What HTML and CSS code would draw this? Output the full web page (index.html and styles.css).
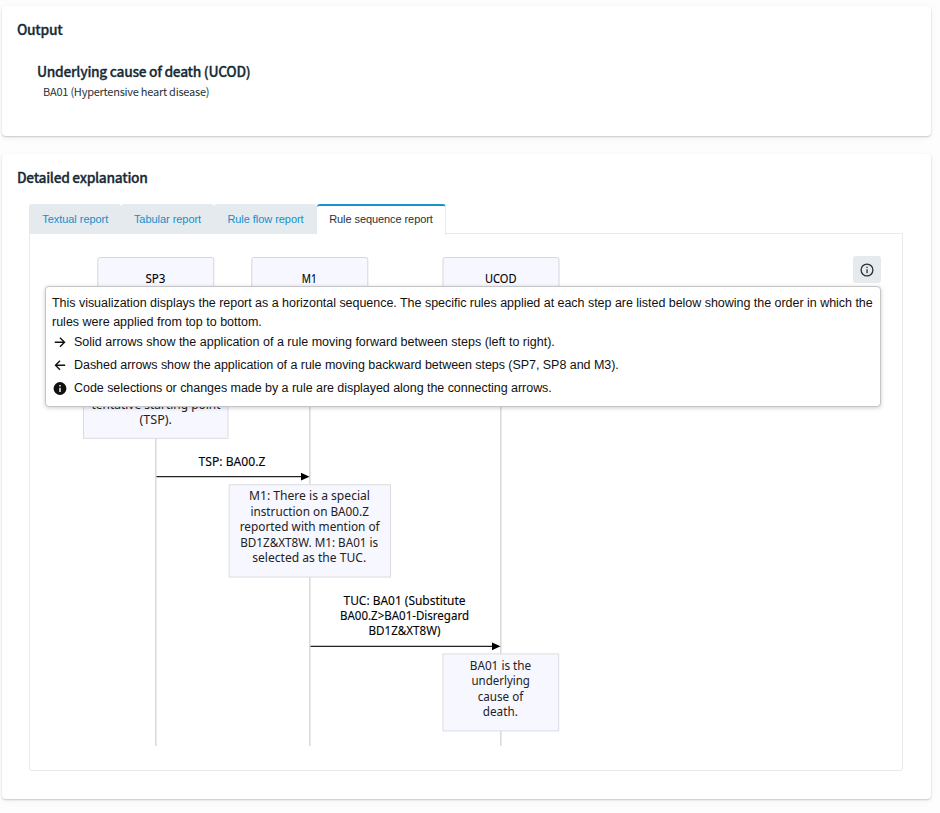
FILE: index.html
```html
<!DOCTYPE html>
<html lang="en">
<head>
<meta charset="utf-8">
<title>Detailed explanation</title>
<link rel="stylesheet" href="styles.css">
</head>
<body>
<section class="card output">
  <h2>Output</h2>
  <div class="result">
    <h3>Underlying cause of death (UCOD)</h3>
    <p>BA01 (Hypertensive heart disease)</p>
  </div>
</section>
<section class="card detail">
  <h2>Detailed explanation</h2>
  <nav class="tabs">
    <a class="tab t1">Textual report</a>
    <a class="tab t2">Tabular report</a>
    <a class="tab t3">Rule flow report</a>
    <a class="tab t4 active">Rule sequence report</a>
  </nav>
  <div class="panel">
    <svg class="diagram" viewBox="30 234 872 535" width="872" height="535">
      <g class="lifeline">
        <path d="M155.8 300V746M309.8 300V746M500.8 300V746"/>
      </g>
      <g class="actor">
        <rect x="97.800" y="257.500" width="116" height="50" rx="2"/>
        <rect x="251.800" y="257.500" width="116" height="50" rx="2"/>
        <rect x="443" y="257.500" width="116" height="50" rx="2"/>
      </g>
      <g class="note">
        <rect x="83.500" y="330" width="144.500" height="108.300"/>
        <rect x="229.200" y="484.700" width="161.300" height="92.300"/>
        <rect x="443" y="653.900" width="115.700" height="77"/>
      </g>
      <g class="arrow">
        <path class="line" d="M156.500 476.700H302M310.500 646.300H493"/>
        <path d="M301 472.800L309.500 476.700L301 480.600ZM492 642.400L500.500 646.300L492 650.200Z"/>
      </g>
      <g class="label">
        <text class="strong" x="155.500" y="282.700" textLength="20" lengthAdjust="spacingAndGlyphs">SP3</text>
        <text class="strong" x="309.300" y="282.700" textLength="15" lengthAdjust="spacingAndGlyphs">M1</text>
        <text class="strong" x="500.700" y="282.700" textLength="31.500" lengthAdjust="spacingAndGlyphs">UCOD</text>
        <text x="156" y="408.600" textLength="129" lengthAdjust="spacingAndGlyphs">tentative starting point</text>
        <text x="155.700" y="424" textLength="32.500" lengthAdjust="spacingAndGlyphs">(TSP).</text>
        <text class="strong" x="232" y="466" textLength="67" lengthAdjust="spacingAndGlyphs">TSP: BA00.Z</text>
        <text x="309.500" y="500.400" textLength="121" lengthAdjust="spacingAndGlyphs">M1: There is a special</text>
        <text x="309.700" y="515.900" textLength="118.500" lengthAdjust="spacingAndGlyphs">instruction on BA00.Z</text>
        <text x="309.700" y="531.300" textLength="140" lengthAdjust="spacingAndGlyphs">reported with mention of</text>
        <text x="309.200" y="546.700" textLength="138" lengthAdjust="spacingAndGlyphs">BD1Z&amp;XT8W. M1: BA01 is</text>
        <text x="309.200" y="562.400" textLength="114" lengthAdjust="spacingAndGlyphs">selected as the TUC.</text>
        <text class="strong" x="404.500" y="604.500" textLength="122" lengthAdjust="spacingAndGlyphs">TUC: BA01 (Substitute</text>
        <text class="strong" x="404.500" y="620" textLength="129" lengthAdjust="spacingAndGlyphs">BA00.Z&gt;BA01-Disregard</text>
        <text class="strong" x="404.500" y="635.300" textLength="72" lengthAdjust="spacingAndGlyphs">BD1Z&amp;XT8W)</text>
        <text x="500.500" y="670" textLength="61.500" lengthAdjust="spacingAndGlyphs">BA01 is the</text>
        <text x="500.700" y="685.300" textLength="58.500" lengthAdjust="spacingAndGlyphs">underlying</text>
        <text x="500.500" y="700.900" textLength="45.500" lengthAdjust="spacingAndGlyphs">cause of</text>
        <text x="500.300" y="716.300" textLength="35" lengthAdjust="spacingAndGlyphs">death.</text>
      </g>
    </svg>
    <button class="info" aria-label="Info">
      <svg viewBox="0 0 14 14" width="14" height="14"><circle cx="7" cy="7" r="5.900" fill="none" stroke="#263238" stroke-width="1.300"/><path d="M6.400 3.700h1.300v1.300H6.400zM6.400 6.200h1.300v4.100H6.400z" fill="#263238"/></svg>
    </button>
    <div class="tooltip">
      <p><span class="lead">This visualization displays the report as a horizontal sequence. The specific rules applied at each step are listed below showing the order in which the</span><br>rules were applied from top to bottom.</p>
      <div class="row">
        <svg viewBox="0 0 14 14" width="14" height="14"><path d="M1.800 6.200H11.300M7 1.700L11.500 6.200L7 10.700" fill="none" stroke="#111" stroke-width="1.400"/></svg>
        <span>Solid arrows show the application of a rule moving forward between steps (left to right).</span>
      </div>
      <div class="row">
        <svg viewBox="0 0 14 14" width="14" height="14"><path d="M12.200 6.200H2.700M7 1.700L2.500 6.200L7 10.700" fill="none" stroke="#111" stroke-width="1.400"/></svg>
        <span class="tight">Dashed arrows show the application of a rule moving backward between steps (SP7, SP8 and M3).</span>
      </div>
      <div class="row">
        <svg viewBox="0 0 14 14" width="14" height="14"><circle cx="7" cy="6.500" r="6.400" fill="#111"/><path d="M6.300 3.100h1.400v1.400H6.300zM6.300 5.700h1.400v4.200H6.300z" fill="#fff"/></svg>
        <span class="tight">Code selections or changes made by a rule are displayed along the connecting arrows.</span>
      </div>
    </div>
  </div>
</section>
</body>
</html>
```
FILE: styles.css
```css
* { box-sizing: border-box; }
body {
  margin: 0;
  padding: 6px 9px 0 1.5px;
  min-height: 813px;
  background: #fdfdfd;
  color: #172b35;
  font-family: "Liberation Sans", Arial, sans-serif;
}
h2, h3, p { margin: 0; }
.card {
  background: #fff;
  border-radius: 4px;
  box-shadow: 0 1px 2px rgba(0, 0, 0, .2), 0 2px 8px rgba(0, 0, 0, .04);
}
.output { height: 130px; padding: 13px 15.500px; }
.detail { height: 645px; margin-top: 18px; padding: 13px 28px 0 27.500px; }
h2, h3, .result p { font-family: "Noto Sans CJK SC", sans-serif; white-space: nowrap; }
h2, h3 { font-weight: 500; font-size: 13.800px; line-height: 20px; letter-spacing: -.3px; -webkit-text-stroke: .3px #172b35; }
.detail h2 { margin-left: -12px; }
.result { padding: 22px 0 0 20px; }
.result p { font-size: 11px; line-height: 18px; letter-spacing: -.24px; margin: 1px 0 0 6px; color: #263238; }
.tabs { display: flex; height: 30px; margin-top: 17px; position: relative; z-index: 1; }
.tab {
  display: flex;
  align-items: center;
  justify-content: center;
  height: 30px;
  padding-left: 1px;
  font-size: 11px;
  white-space: nowrap;
  color: #158fcb;
  background: #e4eaed;
  border-radius: 3px 3px 0 0;
}
.t1 { width: 91.500px; letter-spacing: -.05px; }
.t2 { width: 93px; letter-spacing: -.05px; }
.t3 { width: 103px; letter-spacing: -.05px; }
.t4 { width: 129px; letter-spacing: -.08px; }
.tab.active {
  height: 31px;
  padding-bottom: 3px;
  color: #263238;
  background: #fff;
  border-top: 2px solid #1594cf;
  border-right: 1px solid #e4eaed;
}
.panel {
  position: relative;
  width: 874px;
  height: 537.500px;
  border: 1px solid #e4eaed;
  border-radius: 0 0 3px 3px;
  margin-top: -1px;
}
.diagram { display: block; }
.lifeline path { stroke: #dcdcdc; stroke-width: 1.700; fill: none; }
.actor rect { fill: #f6f7ff; stroke: #d6d6dc; }
.note rect { fill: #f7f7ff; stroke: #dcdce0; }
.arrow path { fill: #000; }
.arrow .line { stroke: #222; stroke-width: 1.200; }
.label text {
  font-family: "Noto Sans", sans-serif;
  font-size: 12px;
  fill: #222;
  text-anchor: middle;
}
.label .strong { fill: #000; stroke: #000; stroke-width: .1px; }
.info {
  position: absolute;
  left: 823px;
  top: 22px;
  display: flex;
  align-items: center;
  justify-content: center;
  width: 28px;
  height: 27px;
  padding: 0;
  border: 0;
  border-radius: 3px;
  background: #e4eaed;
}
.tooltip {
  position: absolute;
  left: 15px;
  top: 52px;
  width: 836px;
  height: 121px;
  padding: 7px 6px;
  background: #fff;
  border: 1px solid #c5c5c5;
  border-radius: 4px;
  box-shadow: 0 1px 4px rgba(0, 0, 0, .2);
  color: #111;
  font-size: 12.500px;
  line-height: 18.500px;
  white-space: nowrap;
}
.lead { letter-spacing: -.03px; }
.tight { letter-spacing: -.045px; }
.row { display: flex; align-items: center; gap: 7px; height: 23px; }
.row svg { margin-left: 1px; }
```
